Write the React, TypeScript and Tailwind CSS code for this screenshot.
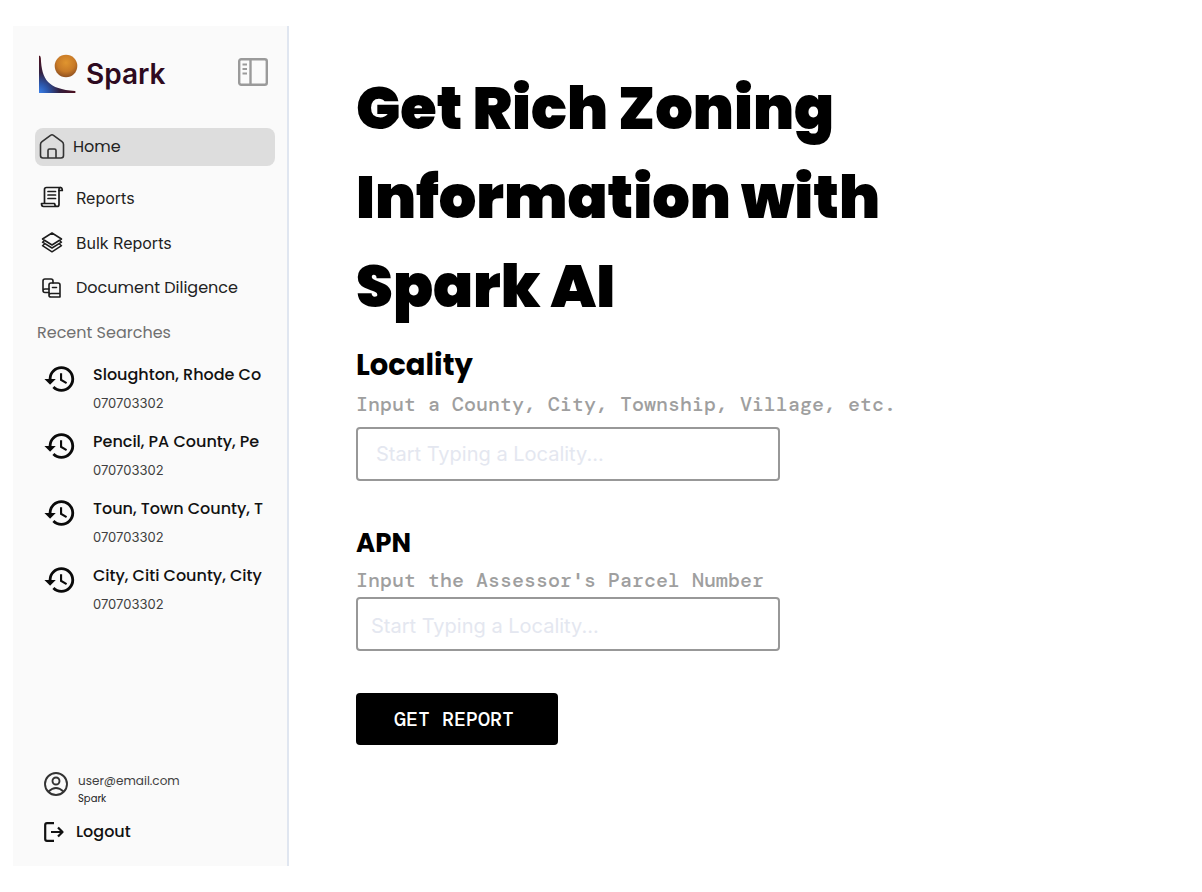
import React from "react";
import { MdHistory } from "react-icons/md";

const navText = "text-base text-[#222222]";

function Logo() {
  return (
    <svg width="40" height="40" viewBox="0 0 40 40" aria-hidden="true">
      <defs>
        <radialGradient id="sun" cx="0.5" cy="0.35" r="0.65">
          <stop offset="0" stopColor="#e0952f" />
          <stop offset="0.6" stopColor="#c87a27" />
          <stop offset="1" stopColor="#8f5020" />
        </radialGradient>
        <radialGradient id="curve" gradientUnits="userSpaceOnUse" cx="0" cy="40" r="36">
          <stop offset="0" stopColor="#3c86f5" />
          <stop offset="0.3" stopColor="#2c55a8" />
          <stop offset="0.6" stopColor="#33203f" />
          <stop offset="1" stopColor="#4a1020" />
        </radialGradient>
      </defs>
      <path d="M1 1.500Q2.700 1.500 2.800 4C3.800 26 10 35 37 37Q38.500 38.200 37 39H1Z" fill="url(#curve)" />
      <circle cx="28" cy="12" r="11.300" fill="url(#sun)" />
    </svg>
  );
}

function PanelIcon() {
  return (
    <svg width="30" height="28" viewBox="0 0 30 28" fill="none" stroke="#9a9a9a" strokeWidth="2.400" aria-hidden="true">
      <rect x="1.200" y="1.200" width="27.600" height="25.600" rx="2" />
      <path d="M12.500 1v26" />
      <path d="M4.500 6.500h4.500M4.500 11h4.500M4.500 15.500h4.500" strokeWidth="1.800" />
    </svg>
  );
}

function HomeIcon() {
  return (
    <svg width="26" height="28" viewBox="0 0 26 28" fill="none" stroke="#333" strokeWidth="1.600" strokeLinejoin="round" aria-hidden="true">
      <path d="M1.500 11.500Q1.500 9.700 3 8.600L11.500 2.300Q13 1.300 14.500 2.300L23 8.600Q24.500 9.700 24.500 11.500V22.500Q24.500 25 22 25H4Q1.500 25 1.500 22.500Z" />
      <path d="M9 25V17.500Q9 16 10.500 16H15.500Q17 16 17 17.500V25" />
    </svg>
  );
}

function ReportIcon() {
  return (
    <svg width="24" height="24" viewBox="0 0 24 24" fill="none" stroke="#1c1c1c" strokeWidth="1.700" strokeLinejoin="round" strokeLinecap="round" aria-hidden="true">
      <path d="M4.500 17V3.500Q4.500 1.500 6.500 1.500H20.500Q22.300 1.500 22.300 4.500H19" />
      <path d="M20.500 1.500Q19 1.500 19 3.500V18.500Q19 20.500 17 20.500H3.500Q1.500 20.500 1.500 17.500H14.500Q15 20.500 17 20.500" />
      <path d="M8 5.500h7.500M8 9h7.500M8 12.500h7.500" />
    </svg>
  );
}

function LayersIcon() {
  return (
    <svg width="24" height="24" viewBox="0 0 24 24" fill="none" stroke="#1c1c1c" strokeWidth="1.500" strokeLinejoin="round" strokeLinecap="round" aria-hidden="true">
      <path d="M12 2L21.500 8L12 14L2.500 8Z" />
      <path d="M4.500 9.500L2.500 11.200L12 17L21.500 11.200L19.500 9.500M4.500 13L2.500 14.700L12 20.800L21.500 14.700L19.500 13" />
    </svg>
  );
}

function DocumentsIcon() {
  return (
    <svg width="24" height="24" viewBox="0 0 24 24" fill="none" stroke="#1c1c1c" strokeWidth="1.600" strokeLinejoin="round" strokeLinecap="round" aria-hidden="true">
      <path d="M9 16.500H5Q3 16.500 3 14.500V5Q3 3 5 3H11Q13 3 13 5V7M3 14.500Q3 13 5 13H9" />
      <path d="M20 17.500H11Q9 17.500 9 19.500Q9 21 11 21H20M20 21V9Q20 7 18 7H11Q9 7 9 9V19.500M12.500 11.500H16.500" />
    </svg>
  );
}

function UserIcon() {
  return (
    <svg width="24" height="24" viewBox="0 0 24 24" fill="none" stroke="#333" strokeWidth="1.900" aria-hidden="true">
      <circle cx="12" cy="12" r="11" />
      <circle cx="12" cy="9" r="3.500" />
      <path d="M4.500 19.500Q12 12.500 19.500 19.500" />
    </svg>
  );
}

function LogoutIcon() {
  return (
    <svg width="20" height="20" viewBox="0 0 20 20" fill="none" stroke="#111" strokeWidth="2.200" strokeLinejoin="round" aria-hidden="true">
      <path d="M10 1.200H3Q1.200 1.200 1.200 3V17Q1.200 18.800 3 18.800H10" />
      <path d="M7 10H18.500M14 5.500L18.500 10L14 14.500" />
    </svg>
  );
}

const links = [
  { label: "Reports", Icon: ReportIcon, font: "font-['Inter',sans-serif]" },
  { label: "Bulk Reports", Icon: LayersIcon, font: "font-['Inter',sans-serif]" },
  { label: "Document Diligence", Icon: DocumentsIcon, font: "" },
];

const searches = [
  { place: "Sloughton, Rhode Co", apn: "070703302" },
  { place: "Pencil, PA County, Pe", apn: "070703302" },
  { place: "Toun, Town County, T", apn: "070703302" },
  { place: "City, Citi County, City", apn: "070703302" },
];

function Sidebar() {
  return (
    <aside className="flex w-[276px] shrink-0 flex-col border-r-2 border-[#e0e6f0] bg-[#fafafa] pb-5">
      <header className="flex items-center pt-7 pr-[19px] pl-[25px]">
        <Logo />
        <span className="ml-2 font-['Inter',sans-serif] text-[28px] leading-10 font-semibold text-[#2e0a20]">Spark</span>
        <button type="button" aria-label="Toggle sidebar" className="mb-1 ml-auto">
          <PanelIcon />
        </button>
      </header>
      <nav className="mt-[34px]">
        <a href="#home" className={`mr-3 ml-[22px] flex h-[38px] items-center gap-2 rounded-lg bg-[#dddddd] pl-1 ${navText}`}>
          <HomeIcon />
          Home
        </a>
        <div className="mt-[9px]">
          {links.map(({ label, Icon, font }) => (
            <a key={label} href="#" className={`flex h-[45px] items-center gap-3 pl-[27px] ${navText} ${font}`}>
              <Icon />
              {label}
            </a>
          ))}
        </div>
      </nav>
      <h2 className="flex h-[45px] items-center pl-6 text-base text-[#707070]">Recent Searches</h2>
      <ul>
        {searches.map(({ place, apn }) => (
          <li key={place} className="flex h-[67px] pr-[23px] pl-[30px]">
            <MdHistory size={34} className="mt-[7px] shrink-0 text-[#0a0a0a]" />
            <a href="#" className="ml-4 min-w-0 flex-1 overflow-hidden pt-2 whitespace-nowrap">
              <span className="block text-base leading-6 font-medium text-[#111111]">{place}</span>
              <span className="mt-1.5 block font-['Inter',sans-serif] text-[13px] leading-5 text-[#404040]">{apn}</span>
            </a>
          </li>
        ))}
      </ul>
      <footer className="mt-auto pl-[31px]">
        <div className="flex gap-2.5">
          <UserIcon />
          <div>
            <p className="text-xs leading-[18px] text-[#404040]">user@email.com</p>
            <p className="text-[10px] leading-[18px] text-[#222222]">Spark</p>
          </div>
        </div>
        <button type="button" className="mt-2.5 flex items-center gap-3 text-base leading-7 font-medium text-[#111111]">
          <LogoutIcon />
          Logout
        </button>
      </footer>
    </aside>
  );
}

const fieldLabel = "block font-bold text-black";
const hint =
  "font-['DM_Mono','Roboto_Mono','Liberation_Mono',monospace] text-xl leading-[26px] whitespace-nowrap font-medium text-[#9f9f9f]";
const box =
  "h-[54px] w-full rounded-[4px] border-2 border-[#989898] bg-white font-['Inter',sans-serif] text-xl text-black placeholder:text-[#e4e7f0] focus:outline-none";

export default function App() {
  return (
    <div className="flex min-h-screen bg-white py-[26px] pl-[13px] font-['Poppins','Inter',sans-serif]">
      <Sidebar />
      <main className="flex-1 pt-[38px] pl-[67px]">
        <h1 className="max-w-[600px] text-[59px] leading-[89px] font-black text-black">
          Get Rich Zoning Information with Spark AI
        </h1>
        <form className="max-w-[424px]" onSubmit={(e) => e.preventDefault()}>
          <label htmlFor="locality" className={`${fieldLabel} mt-3 text-[29px] leading-[44px]`}>
            Locality
          </label>
          <p className={`${hint} mt-1`}>Input a County, City, Township, Village, etc.</p>
          <input id="locality" type="text" placeholder="Start Typing a Locality..." className={`${box} mt-2.5 px-[18px]`} />
          <label htmlFor="apn" className={`${fieldLabel} mt-10 text-[26px] leading-[44px]`}>
            APN
          </label>
          <p className={`${hint} mt-0.5`}>Input the Assessor's Parcel Number</p>
          <input id="apn" type="text" placeholder="Start Typing a Locality..." className={`${box} mt-1 px-[13px] pt-1`} />
          <button
            type="submit"
            className="mt-[42px] h-[52px] w-[202px] rounded-[4px] bg-black pr-1.5 font-['DM_Mono','Roboto_Mono','Liberation_Mono',monospace] text-xl font-medium text-white"
          >
            GET REPORT
          </button>
        </form>
      </main>
    </div>
  );
}
